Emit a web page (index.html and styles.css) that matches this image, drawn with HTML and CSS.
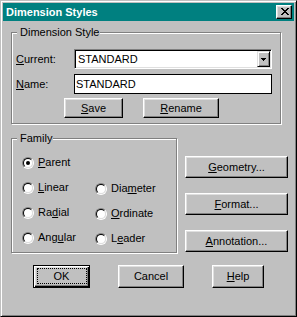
FILE: index.html
```html
<!DOCTYPE html>
<html>
<head>
<meta charset="utf-8">
<title>Dimension Styles</title>
<link rel="stylesheet" href="styles.css">
</head>
<body>
<div class="window">
  <div class="titlebar">
    <span class="title">Dimension Styles</span>
    <div class="close">
      <svg width="8" height="7" viewBox="0 0 8 7" shape-rendering="crispEdges"><path d="M0 0h2v1H0z M6 0h2v1H6z M1 1h2v1H1z M5 1h2v1H5z M2 2h4v1H2z M3 3h2v1H3z M2 4h4v1H2z M1 5h2v1H1z M5 5h2v1H5z M0 6h2v1H0z M6 6h2v1H6z" fill="#000"/></svg>
    </div>
  </div>
  <div class="client">
    <div class="group group-style">
      <span class="legend">Dimension Style</span>
      <div class="field-row">
        <span class="field-label"><u>C</u>urrent:</span>
        <div class="combo">
          <span class="combo-text">STANDARD</span>
          <span class="combo-btn"><svg width="5" height="3" viewBox="0 0 5 3" shape-rendering="crispEdges"><path d="M0 0h5v1H0z M1 1h3v1H1z M2 2h1v1H2z" fill="#000"/></svg></span>
        </div>
      </div>
      <div class="field-row row-name">
        <span class="field-label"><u>N</u>ame:</span>
        <div class="edit">STANDARD</div>
      </div>
      <div class="btn-row">
        <div class="btn btn-save"><span><u>S</u>ave</span></div>
        <div class="btn btn-rename"><span><u>R</u>ename</span></div>
      </div>
    </div>
    <div class="middle">
      <div class="group group-family">
        <span class="legend">Family</span>
        <div class="radios">
          <div class="radio-item"><span class="radio checked"></span><span><u>P</u>arent</span></div>
          <div></div>
          <div class="radio-item"><span class="radio"></span><span><u>L</u>inear</span></div>
          <div class="radio-item col2"><span class="radio"></span><span>Dia<u>m</u>eter</span></div>
          <div class="radio-item"><span class="radio"></span><span>Ra<u>d</u>ial</span></div>
          <div class="radio-item col2"><span class="radio"></span><span><u>O</u>rdinate</span></div>
          <div class="radio-item"><span class="radio"></span><span>Ang<u>u</u>lar</span></div>
          <div class="radio-item col2"><span class="radio"></span><span>L<u>e</u>ader</span></div>
        </div>
      </div>
      <div class="side">
        <div class="btn btn-side"><span><u>G</u>eometry...</span></div>
        <div class="btn btn-side"><span><u>F</u>ormat...</span></div>
        <div class="btn btn-side"><span><u>A</u>nnotation...</span></div>
      </div>
    </div>
    <div class="bottom">
      <div class="btn btn-default btn-ok"><span>OK</span></div>
      <div class="btn btn-cancel"><span>Cancel</span></div>
      <div class="btn btn-help"><span><u>H</u>elp</span></div>
    </div>
  </div>
</div>
</body>
</html>
```
FILE: styles.css
```css
* { box-sizing: border-box; }
html, body { margin: 0; padding: 0; }
body {
  background: #c0c0c0;
  font-family: "Liberation Sans", Arial, sans-serif;
  font-size: 11px;
  color: #000;
}
u { text-underline-offset: 1px; }

.window {
  width: 297px;
  height: 317px;
  border: 1px solid;
  border-color: #c0c0c0 #000 #000 #c0c0c0;
  box-shadow: inset 1px 1px #fff, inset -1px -1px #808080;
  padding: 2px;
  background: #c0c0c0;
}

.titlebar {
  height: 18px;
  display: flex;
  justify-content: space-between;
  align-items: flex-start;
  padding: 0 2px 0 3px;
  background: #008080;
  color: #fff;
  font-weight: bold;
  line-height: 18px;
}
.close {
  width: 16px;
  height: 14px;
  margin-top: 2px;
  background: #c0c0c0;
  border: 1px solid;
  border-color: #fff #000 #000 #fff;
  box-shadow: inset -1px -1px #808080, inset 1px 1px #dfdfdf;
  padding: 2px 0 0 4px;
  display: flex;
  align-items: flex-start;
}
.close svg { display: block; }

.client { padding: 11px 0 0 8px; }

.group {
  position: relative;
  border: 1px solid #808080;
  box-shadow: inset 1px 1px #fff, 1px 1px #fff;
}
.legend {
  position: absolute;
  top: -7px;
  left: 5px;
  padding: 0 1px 0 3px;
  background: #c0c0c0;
  line-height: 13px;
  white-space: nowrap;
}

.group-style {
  width: 270px;
  height: 92px;
  padding: 16px 0 0 4px;
}
.field-row {
  display: flex;
  align-items: center;
  height: 20px;
}
.row-name { margin-top: 5px; }
.field-label { width: 58px; line-height: 13px; }

.combo {
  width: 198px;
  height: 20px;
  display: flex;
  border: 1px solid;
  border-color: #808080 #fff #fff #808080;
  box-shadow: inset 1px 1px #000, inset -1px -1px #dfdfdf;
  background: #fff;
  padding: 1px 1px 1px 3px;
}
.combo-text { flex: 1; line-height: 16px; }
.combo-btn {
  width: 13px;
  height: 16px;
  background: #c0c0c0;
  border: 1px solid;
  border-color: #dfdfdf #000 #000 #dfdfdf;
  box-shadow: inset 1px 1px #fff, inset -1px -1px #808080;
  display: flex;
  align-items: center;
  justify-content: center;
}
.combo-btn svg { display: block; margin-top: 1px; }

.edit {
  width: 198px;
  height: 20px;
  border: 1px solid #000;
  background: #fff;
  padding-left: 1px;
  line-height: 18px;
}

.btn-row {
  display: flex;
  margin-top: 4px;
  height: 20px;
}

.btn {
  position: relative;
  display: flex;
  align-items: center;
  justify-content: center;
  background: #c0c0c0;
  border: 1px solid;
  border-color: #fff #000 #000 #fff;
  box-shadow: inset -1px -1px #808080, inset 1px 1px #dfdfdf;
  line-height: 13px;
  white-space: nowrap;
}
.btn-save { width: 59px; margin-left: 48px; }
.btn-rename { width: 76px; margin-left: 20px; }

.middle {
  display: flex;
  margin-top: 14px;
  height: 115px;
}
.group-family {
  width: 166px;
  height: 115px;
  padding: 11px 0 0 10px;
}
.radios {
  display: grid;
  grid-template-columns: 73px auto;
  grid-auto-rows: 25px;
}
.radio-item {
  display: flex;
  align-items: center;
  gap: 4px;
  line-height: 13px;
}
.radio-item.col2 { padding-top: 2px; }
.radio {
  position: relative;
  width: 12px;
  height: 12px;
  border-radius: 50%;
  border: 1px solid;
  border-color: #808080 #fff #fff #808080;
  flex: none;
}
.radio::before {
  content: "";
  position: absolute;
  inset: 0;
  border-radius: 50%;
  border: 1px solid;
  border-color: #000 #dfdfdf #dfdfdf #000;
  background: #fff;
}
.radio.checked::after {
  content: "";
  position: absolute;
  left: 3px;
  top: 3px;
  width: 4px;
  height: 4px;
  border-radius: 50%;
  background: #000;
}

.side {
  display: flex;
  flex-direction: column;
  gap: 15px;
  margin-left: 8px;
  padding-top: 18px;
  width: 103px;
}
.btn-side { height: 22px; }

.bottom {
  display: flex;
  margin-top: 12px;
  height: 23px;
}
.bottom .btn { height: 23px; }
.btn-ok { width: 57px; margin-left: 22px; }
.btn-cancel { width: 66px; margin-left: 28px; }
.btn-help { width: 52px; margin-left: 28px; }

.btn-default {
  border: 1px solid #000;
  box-shadow: inset 1px 1px #fff, inset -1px -1px #000, inset -2px -2px #808080, inset 2px 2px #dfdfdf;
}
.btn-default::after {
  content: "";
  position: absolute;
  top: 2px;
  right: 2px;
  bottom: 3px;
  left: 3px;
  border: 1px dotted #000;
}
```
